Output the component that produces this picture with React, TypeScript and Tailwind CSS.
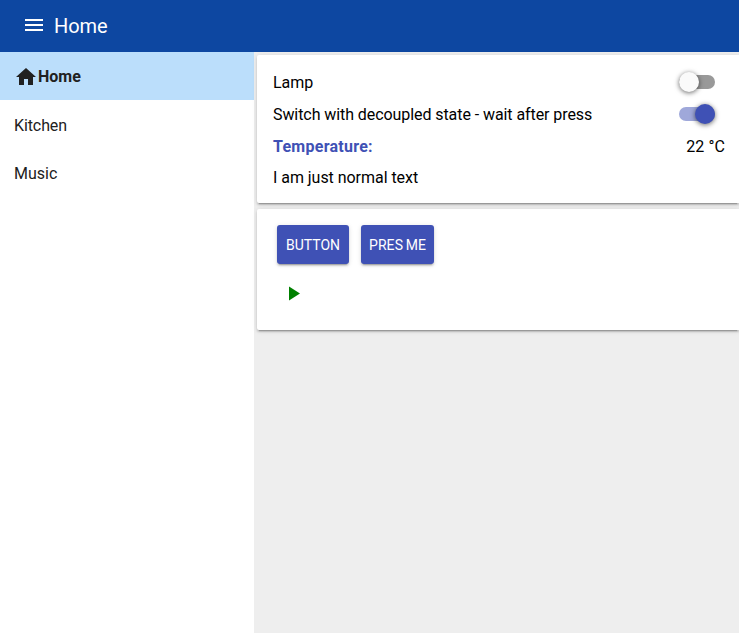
export default function App() {
  return (
    <div className="flex h-[633px] w-full flex-col overflow-hidden bg-[#eeeeee] font-['Roboto',sans-serif] text-base text-black">
      <header className="flex h-[52px] shrink-0 items-center bg-[#0d47a1] pl-[22px] text-white">
        <svg className="mb-0.5 size-6" viewBox="0 0 24 24" fill="currentColor"><path d="M3 18h18v-2H3v2zm0-5h18v-2H3v2zm0-7v2h18V6H3z" /></svg>
        <h1 className="ml-2 text-xl leading-6 tracking-[-0.1px]">Home</h1>
      </header>
      <div className="flex min-h-0 flex-1">
        <nav className="w-[254px] shrink-0 bg-white text-[#212121]">
          <a className="flex h-12 items-center bg-[#bbdefb] pl-[14px] font-bold">
            <svg className="mt-0.5 size-6" viewBox="0 0 24 24" fill="currentColor"><path d="M10 20v-6h4v6h5v-8h3L12 3 2 12h3v8z" /></svg>
            <span className="pt-0.5">Home</span>
          </a>
          <a className="mt-0.5 flex h-12 items-center pl-[14px] tracking-[-0.1px]">Kitchen</a>
          <a className="flex h-12 items-center pl-[14px]">Music</a>
        </nav>
        <main className="flex min-w-0 flex-1 flex-col gap-[6px] pt-[3px] pl-[3px]">
          <section className="h-[148px] rounded-l-[2px] bg-white pt-3 pr-[15px] pl-4 shadow-[0_2px_2px_0_rgba(0,0,0,0.14),0_3px_1px_-2px_rgba(0,0,0,0.2),0_1px_5px_0_rgba(0,0,0,0.12)]">
            <div className="flex h-8 items-center justify-between">
              <span>Lamp</span>
              <span className="mr-[9px] mb-0.5 flex h-[14px] w-9 items-center rounded-full bg-[#999999]">
                <span className="size-5 shrink-0 rounded-full bg-[#fafafa] shadow-[0_1px_5px_rgba(0,0,0,0.6)]" />
              </span>
            </div>
            <div className="flex h-8 items-center justify-between">
              <span className="tracking-[-0.075px]">Switch with decoupled state - wait after press</span>
              <span className="mr-[9px] mb-0.5 flex h-[14px] w-9 items-center justify-end rounded-full bg-[#9fa8da]">
                <span className="size-5 shrink-0 rounded-full bg-[#3f51b5] shadow-[0_1px_5px_rgba(0,0,0,0.6)]" />
              </span>
            </div>
            <div className="flex h-8 items-center justify-between">
              <span className="font-bold tracking-[0.26px] text-[#3f51b5]">Temperature:</span>
              <span className="-mr-px tracking-[0.1px]">22 °C</span>
            </div>
            <div className="flex h-[30px] items-center tracking-[-0.04px]">I am just normal text</div>
          </section>
          <section className="h-[121px] rounded-l-[2px] bg-white pt-4 pl-5 shadow-[0_2px_2px_0_rgba(0,0,0,0.14),0_3px_1px_-2px_rgba(0,0,0,0.2),0_1px_5px_0_rgba(0,0,0,0.12)]">
            <div className="flex gap-3 text-sm text-white">
              <button className="h-[39px] w-[72px] rounded-[3px] bg-[#3f51b5] shadow-[0_2px_2px_0_rgba(0,0,0,0.14),0_3px_1px_-2px_rgba(0,0,0,0.2),0_1px_5px_0_rgba(0,0,0,0.12)]">BUTTON</button>
              <button className="h-[39px] w-[73px] rounded-[3px] bg-[#3f51b5] whitespace-nowrap [word-spacing:-1px] tracking-[0.1px] shadow-[0_2px_2px_0_rgba(0,0,0,0.14),0_3px_1px_-2px_rgba(0,0,0,0.2),0_1px_5px_0_rgba(0,0,0,0.12)]">PRES ME</button>
            </div>
            <svg className="mt-[18px] ml-1 size-6" viewBox="0 0 24 24" fill="#008000"><path d="M8 4.6v14l11-7z" /></svg>
          </section>
        </main>
      </div>
    </div>
  );
}
